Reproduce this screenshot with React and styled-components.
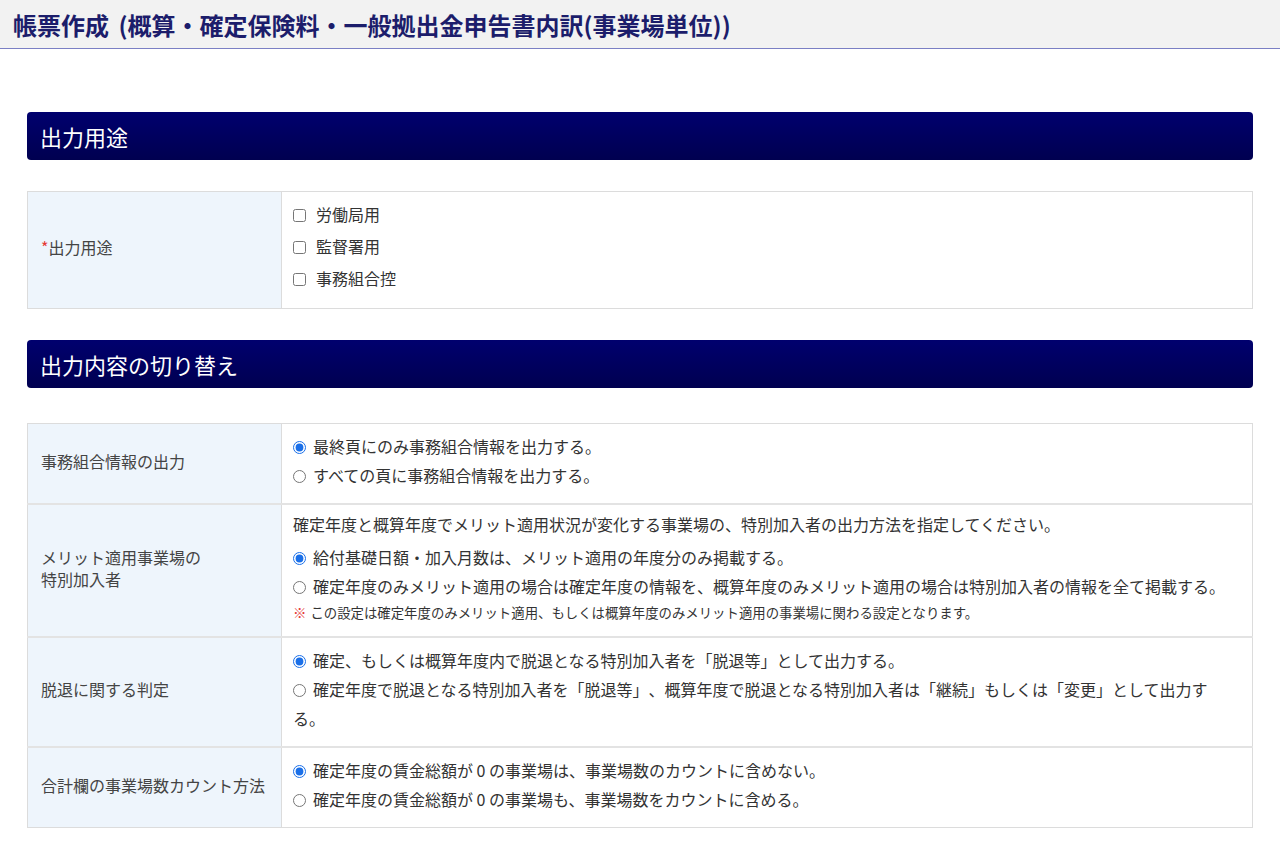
import React from 'react';
import styled, { createGlobalStyle } from 'styled-components';

const GlobalStyle = createGlobalStyle`
  html, body {
    margin: 0;
    padding: 0;
    background: #fff;
    font-family: "Noto Sans CJK JP", "Noto Sans", sans-serif;
    color: #333;
    text-spacing-trim: space-all;
  }
`;

const TitleBar = styled.header`
  height: 48px;
  display: flex;
  align-items: center;
  padding: 0 13px;
  background: #f2f2f2;
  border-bottom: 1px solid #7b7fc4;
`;

const Title = styled.h1`
  margin: 0;
  font-size: 24px;
  font-weight: bold;
  color: #1c1d6b;
  word-spacing: 4px;
`;

const Main = styled.main`
  padding: 63px 27px 8px;
`;

const SectionHead = styled.h2`
  margin: ${(props) => props.top || '0'} 0 ${(props) => props.bottom || '31px'};
  height: 48px;
  display: flex;
  align-items: center;
  padding: 0 13px;
  border-radius: 4px;
  background: linear-gradient(#00006e, #000050);
  color: #fff;
  font-size: 22px;
  font-weight: normal;
`;

const Table = styled.table`
  width: 100%;
  border-collapse: collapse;
  border: 1px solid #dcdcdc;
  font-size: 16px;
`;

const Row = styled.tr`
  border-bottom: 2px solid #e3e3e3;
  &:last-child {
    border-bottom: 1px solid #dcdcdc;
  }
`;

const Label = styled.th`
  width: 254px;
  box-sizing: border-box;
  padding: 0 13px 6px;
  background: #eef5fc;
  border-right: 1px solid #dcdcdc;
  text-align: left;
  vertical-align: middle;
  font-weight: normal;
  color: #444;
  line-height: 22px;
`;

const Required = styled.span`
  color: #e53935;
`;

const Cell = styled.td`
  padding: ${(props) => props.pad || '8px 17px 13px 11px'};
  vertical-align: top;
`;

const Option = styled.label`
  display: block;
  line-height: ${(props) => props.lh || '29px'};
  color: #333;

  input {
    margin: 0 7px 0 0;
    width: 13px;
    height: 13px;
    vertical-align: -1px;
    accent-color: #1a6fe8;
  }
  input[type='checkbox'] {
    margin-right: 10px;
  }
`;

const Lead = styled.p`
  margin: 0 0 8px;
  line-height: 22px;
`;

const Note = styled.p`
  margin: 0;
  line-height: 22px;
  font-size: 13.4px;
  color: #333;

  span {
    color: #e53935;
    margin-right: 4px;
  }
`;

const uses = ['労働局用', '監督署用', '事務組合控'];

const Radio = ({ name, checked, children }) => (
  <Option>
    <input type="radio" name={name} defaultChecked={checked} />
    {children}
  </Option>
);

const App = () => (
  <>
    <GlobalStyle />
    <TitleBar>
      <Title>帳票作成 (概算・確定保険料・一般拠出金申告書内訳(事業場単位))</Title>
    </TitleBar>

    <Main>
      <SectionHead>出力用途</SectionHead>
      <Table>
        <tbody>
          <Row>
            <Label>
              <Required>*</Required>出力用途
            </Label>
            <Cell pad="6px 17px 14px 11px">
              {uses.map((u) => (
                <Option key={u} lh="32px">
                  <input type="checkbox" />
                  {u}
                </Option>
              ))}
            </Cell>
          </Row>
        </tbody>
      </Table>

      <SectionHead top="31px" bottom="35px">出力内容の切り替え</SectionHead>
      <Table>
        <tbody>
          <Row>
            <Label>事務組合情報の出力</Label>
            <Cell>
              <Radio name="jimu" checked>最終頁にのみ事務組合情報を出力する。</Radio>
              <Radio name="jimu">すべての頁に事務組合情報を出力する。</Radio>
            </Cell>
          </Row>
          <Row>
            <Label>
              メリット適用事業場の
              <br />
              特別加入者
            </Label>
            <Cell>
              <Lead>確定年度と概算年度でメリット適用状況が変化する事業場の、特別加入者の出力方法を指定してください。</Lead>
              <Radio name="merit" checked>給付基礎日額・加入月数は、メリット適用の年度分のみ掲載する。</Radio>
              <Radio name="merit">
                確定年度のみメリット適用の場合は確定年度の情報を、概算年度のみメリット適用の場合は特別加入者の情報を全て掲載する。
              </Radio>
              <Note>
                <span>※</span>この設定は確定年度のみメリット適用、もしくは概算年度のみメリット適用の事業場に関わる設定となります。
              </Note>
            </Cell>
          </Row>
          <Row>
            <Label>脱退に関する判定</Label>
            <Cell>
              <Radio name="dattai" checked>確定、もしくは概算年度内で脱退となる特別加入者を「脱退等」として出力する。</Radio>
              <Radio name="dattai">
                確定年度で脱退となる特別加入者を「脱退等」、概算年度で脱退となる特別加入者は「継続」もしくは「変更」として出力する。
              </Radio>
            </Cell>
          </Row>
          <Row>
            <Label>合計欄の事業場数カウント方法</Label>
            <Cell>
              <Radio name="count" checked>確定年度の賃金総額が 0 の事業場は、事業場数のカウントに含めない。</Radio>
              <Radio name="count">確定年度の賃金総額が 0 の事業場も、事業場数をカウントに含める。</Radio>
            </Cell>
          </Row>
        </tbody>
      </Table>
    </Main>
  </>
);

export default App;
